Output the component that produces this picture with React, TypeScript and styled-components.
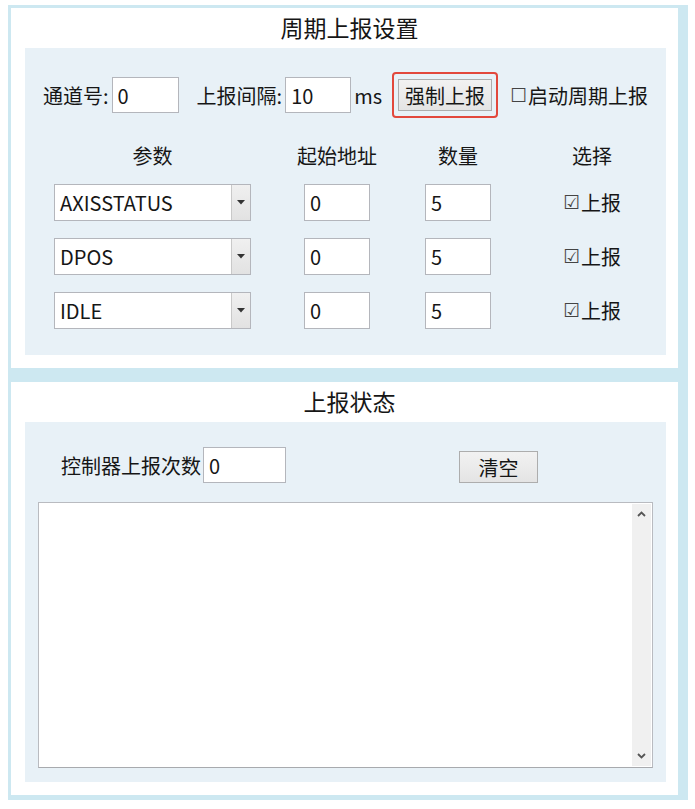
import React, { useState } from 'react';
import styled, { createGlobalStyle } from 'styled-components';

const GlobalStyle = createGlobalStyle`
  html, body {
    margin: 0;
    padding: 0;
    background: #ffffff;
  }
  body {
    font-family: "Noto Sans CJK SC", "Noto Sans", sans-serif;
    color: #161616;
  }
`;

const Frame = styled.div`
  margin: 5px 0 0 8px;
  width: 667px;
  background: #cde8f1;
  padding: 3px 10px 5px 3px;
  display: flex;
  flex-direction: column;
  gap: 14px;
`;

const Panel = styled.section`
  background: #ffffff;
  padding: 0 12px 13px 14px;
`;

const Title = styled.div`
  height: 40px;
  display: flex;
  align-items: center;
  justify-content: center;
  font-size: 23px;
  padding-left: 8px;
  padding-bottom: 3px;
  box-sizing: border-box;
`;

const Inner = styled.div<{ $pad: string }>`
  background: #e8f1f7;
  padding: ${p => p.$pad};
`;

const TopRow = styled.div`
  display: flex;
  align-items: center;
  height: 36px;
  padding-left: 18px;
  margin-bottom: 30px;
  font-size: 20px;
`;

const Label = styled.span<{ $ml?: number }>`
  margin-left: ${p => p.$ml ?? 0}px;
  white-space: nowrap;
`;

const TextBox = styled.input<{ $w: number; $h?: number; $ml?: number }>`
  box-sizing: border-box;
  width: ${p => p.$w}px;
  height: ${p => p.$h ?? 36}px;
  margin-left: ${p => p.$ml ?? 3}px;
  border: 1px solid #b4b6bc;
  background: #ffffff;
  font-family: inherit;
  font-size: 20px;
  color: #161616;
  padding: 0 5px;
  outline: none;
`;

const Highlight = styled.span`
  display: inline-flex;
  border: 2px solid #e2483c;
  border-radius: 4px;
  padding: 5px 4px;
  margin-left: 10px;
`;

const Button = styled.button<{ $w: number }>`
  box-sizing: border-box;
  width: ${p => p.$w}px;
  height: 32px;
  border: 1px solid #adadad;
  background: linear-gradient(#f2f2f2, #e4e4e4);
  font-family: inherit;
  font-size: 20px;
  color: #161616;
  padding: 0;
  cursor: pointer;
`;

const CheckLabel = styled.label`
  display: inline-flex;
  align-items: center;
  white-space: nowrap;
  cursor: pointer;
`;

const Box = styled.span`
  font-family: "DejaVu Sans", sans-serif;
  font-size: 19px;
  line-height: 1;
  color: #444;
  margin-right: 1px;
`;

const Table = styled.div`
  display: grid;
  grid-template-columns: 197px 172px 70px 172px;
  grid-auto-rows: 37px;
  grid-template-rows: 24px;
  row-gap: 17px;
  padding-left: 29px;
  align-items: center;
  font-size: 20px;
`;

const Head = styled.div<{ $shift?: number }>`
  justify-self: center;
  margin-left: ${p => (p.$shift ?? 0) * 2}px;
`;

const Cell = styled.div<{ $shift?: number }>`
  justify-self: center;
  margin-left: ${p => (p.$shift ?? 0) * 2}px;
  display: flex;
  align-items: center;
`;

const Combo = styled.div`
  box-sizing: border-box;
  width: 197px;
  height: 37px;
  border: 1px solid #b4b6bc;
  background: #ffffff;
  display: flex;
  align-items: stretch;
`;

const ComboText = styled.div`
  flex: 1;
  display: flex;
  align-items: center;
  padding-left: 5px;
`;

const ComboArrow = styled.div`
  width: 18px;
  border-left: 1px solid #c9c9c9;
  background: linear-gradient(#f0f0f0, #e2e2e2);
  display: flex;
  align-items: center;
  justify-content: center;
`;

const StatusRow = styled.div`
  display: flex;
  align-items: center;
  height: 36px;
  padding-left: 23px;
  font-size: 20px;
  margin-bottom: 19px;
`;

const ClearWrap = styled.div`
  margin-left: 173px;
  margin-top: 4px;
`;

const LogBox = styled.div`
  box-sizing: border-box;
  height: 266px;
  border: 1px solid #b9bbc0;
  border-bottom-color: #a8aaae;
  background: #ffffff;
  display: flex;
  justify-content: flex-end;
  padding: 1px 1px 1px 0;
`;

const ScrollBar = styled.div`
  width: 19px;
  background: #f0f0f0;
  display: flex;
  flex-direction: column;
  justify-content: space-between;
  align-items: center;
  padding: 7px 0;
`;

const Chevron = ({ up }: { up?: boolean }) => (
  <svg width="9" height="6" viewBox="0 0 9 6">
    <path
      d={up ? 'M1 5 L4.5 1.5 L8 5' : 'M1 1 L4.5 4.5 L8 1'}
      fill="none"
      stroke="#555"
      strokeWidth="1.8"
    />
  </svg>
);

const rows = ['AXISSTATUS', 'DPOS', 'IDLE'];

export default function App() {
  const [periodic, setPeriodic] = useState(false);
  const [checked, setChecked] = useState([true, true, true]);

  return (
    <>
      <GlobalStyle />
      <Frame>
        <Panel>
          <Title>周期上报设置</Title>
          <Inner $pad="29px 0 26px 0">
            <TopRow>
              <Label>通道号:</Label>
              <TextBox $w={67} defaultValue="0" />
              <Label $ml={18}>上报间隔:</Label>
              <TextBox $w={66} defaultValue="10" />
              <Label $ml={3}>ms</Label>
              <Highlight>
                <Button $w={94}>强制上报</Button>
              </Highlight>
              <CheckLabel style={{ marginLeft: 12 }} onClick={() => setPeriodic(!periodic)}>
                <Box>{periodic ? '☑' : '☐'}</Box>启动周期上报
              </CheckLabel>
            </TopRow>
            <Table>
              <Head>参数</Head>
              <Head>起始地址</Head>
              <Head>数量</Head>
              <Head $shift={13}>选择</Head>
              {rows.map((name, i) => (
                <React.Fragment key={name}>
                  <Cell>
                    <Combo>
                      <ComboText>{name}</ComboText>
                      <ComboArrow>
                        <svg width="8" height="5" viewBox="0 0 8 5">
                          <path d="M0 0 H8 L4 4.5 Z" fill="#333" />
                        </svg>
                      </ComboArrow>
                    </Combo>
                  </Cell>
                  <Cell>
                    <TextBox $w={66} $h={37} $ml={0} defaultValue="0" />
                  </Cell>
                  <Cell>
                    <TextBox $w={66} $h={37} $ml={0} defaultValue="5" />
                  </Cell>
                  <Cell $shift={13}>
                    <CheckLabel
                      onClick={() => setChecked(checked.map((c, j) => (j === i ? !c : c)))}
                    >
                      <Box>{checked[i] ? '☑' : '☐'}</Box>上报
                    </CheckLabel>
                  </Cell>
                </React.Fragment>
              ))}
            </Table>
          </Inner>
        </Panel>
        <Panel>
          <Title>上报状态</Title>
          <Inner $pad="25px 13px 14px 13px">
            <StatusRow>
              <Label>控制器上报次数</Label>
              <TextBox $w={83} $ml={2} defaultValue="0" />
              <ClearWrap>
                <Button $w={79}>清空</Button>
              </ClearWrap>
            </StatusRow>
            <LogBox>
              <ScrollBar>
                <Chevron up />
                <Chevron />
              </ScrollBar>
            </LogBox>
          </Inner>
        </Panel>
      </Frame>
    </>
  );
}
